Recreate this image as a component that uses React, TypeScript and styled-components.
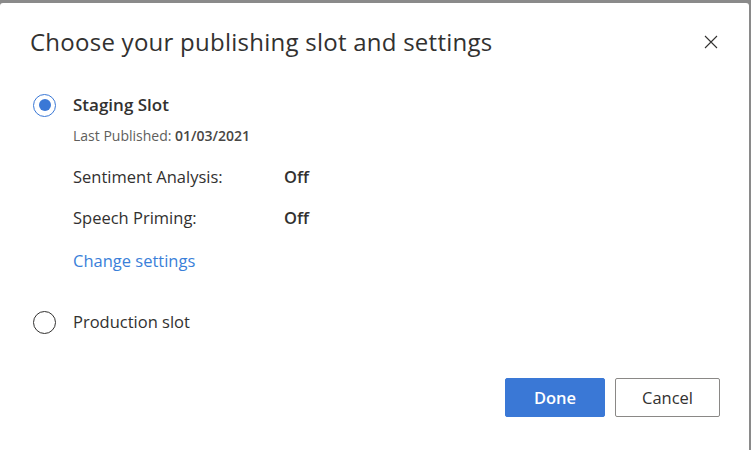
import React from "react";
import styled, { createGlobalStyle } from "styled-components";

const Global = createGlobalStyle`
  html, body { margin: 0; padding: 0; background: #8a8a8a; }
  body { font-family: "Open Sans", "Noto Sans", sans-serif; }
`;

const Frame = styled.div`
  width: 751px;
  height: 450px;
  box-sizing: border-box;
  padding: 3px 2px 0 0;
  background: #8a8a8a;
`;

const Dialog = styled.div`
  width: 749px;
  height: 447px;
  box-sizing: border-box;
  background: #fff;
  border-radius: 3px 3px 0 0;
  display: flex;
  flex-direction: column;
  padding: 22px 29px 0 30px;
  color: #323130;
`;

const Header = styled.div`
  display: flex;
  align-items: center;
  justify-content: space-between;
  height: 34px;
`;

const Title = styled.h1`
  margin: 0;
  font-size: 24px;
  line-height: 34px;
  font-weight: 400;
  letter-spacing: 0.25px;
  color: #323130;
`;

const Close = styled.button`
  border: none;
  background: none;
  padding: 0;
  width: 16px;
  height: 16px;
  display: flex;
  align-items: center;
  justify-content: center;
  cursor: pointer;
  margin-right: 1px;
`;

const Options = styled.div`
  display: flex;
  flex-direction: column;
  margin-top: 34px;
`;

const OptionRow = styled.div`
  display: flex;
  align-items: center;
  gap: 17px;
  height: 24px;
`;

const Radio = styled.span<{ $checked?: boolean }>`
  width: 23px;
  height: 23px;
  box-sizing: border-box;
  border-radius: 50%;
  border: 1px solid ${(p) => (p.$checked ? "#3a78d6" : "#323130")};
  display: flex;
  align-items: center;
  justify-content: center;
  margin-left: 3px;
  &::after {
    content: "";
    width: 12px;
    height: 12px;
    border-radius: 50%;
    background: #3a78d6;
    display: ${(p) => (p.$checked ? "block" : "none")};
  }
`;

const OptionLabel = styled.span<{ $bold?: boolean }>`
  font-size: ${(p) => (p.$bold ? "17px" : "16.5px")};
  line-height: 24px;
  font-weight: ${(p) => (p.$bold ? 600 : 400)};
  color: #323130;
`;

const Details = styled.div`
  display: flex;
  flex-direction: column;
  padding-left: 43px;
`;

const Published = styled.div`
  font-size: 14px;
  color: #605e5c;
  margin-top: 10px;
  line-height: 18px;
  b {
    font-weight: 600;
    color: #484644;
  }
`;

const SettingsGrid = styled.div`
  display: grid;
  grid-template-columns: 211px auto;
  row-gap: 19px;
  margin-top: 21px;
  font-size: 16.5px;
  line-height: 22px;
`;

const SettingName = styled.span`
  color: #323130;
`;

const SettingValue = styled.span`
  color: #323130;
  font-weight: 600;
`;

const Link = styled.a`
  color: #3a7fd9;
  font-size: 16.5px;
  line-height: 22px;
  margin-top: 21px;
  text-decoration: none;
  cursor: pointer;
`;

const SecondOption = styled.div`
  margin-top: 38px;
`;

const Footer = styled.div`
  display: flex;
  justify-content: flex-end;
  gap: 10px;
  margin-top: 44px;
`;

const Button = styled.button<{ $primary?: boolean }>`
  height: 39px;
  box-sizing: border-box;
  width: ${(p) => (p.$primary ? "100px" : "105px")};
  border-radius: 2px;
  font-family: inherit;
  font-size: 16.5px;
  font-weight: ${(p) => (p.$primary ? 600 : 400)};
  background: ${(p) => (p.$primary ? "#3a78d6" : "#fff")};
  color: ${(p) => (p.$primary ? "#fff" : "#323130")};
  border: 1px solid ${(p) => (p.$primary ? "#3a78d6" : "#8a8886")};
  cursor: pointer;
`;

export default function App() {
  return (
    <>
      <Global />
      <Frame>
        <Dialog>
          <Header>
            <Title>Choose your publishing slot and settings</Title>
            <Close aria-label="Close">
              <svg width="14" height="14" viewBox="0 0 14 14">
                <path d="M1 1 L13 13 M13 1 L1 13" stroke="#323130" strokeWidth="1.1" fill="none" />
              </svg>
            </Close>
          </Header>
          <Options>
            <OptionRow>
              <Radio $checked />
              <OptionLabel $bold>Staging Slot</OptionLabel>
            </OptionRow>
            <Details>
              <Published>
                Last Published: <b>01/03/2021</b>
              </Published>
              <SettingsGrid>
                <SettingName>Sentiment Analysis:</SettingName>
                <SettingValue>Off</SettingValue>
                <SettingName>Speech Priming:</SettingName>
                <SettingValue>Off</SettingValue>
              </SettingsGrid>
              <Link>Change settings</Link>
            </Details>
            <SecondOption>
              <OptionRow>
                <Radio />
                <OptionLabel>Production slot</OptionLabel>
              </OptionRow>
            </SecondOption>
          </Options>
          <Footer>
            <Button $primary>Done</Button>
            <Button>Cancel</Button>
          </Footer>
        </Dialog>
      </Frame>
    </>
  );
}
